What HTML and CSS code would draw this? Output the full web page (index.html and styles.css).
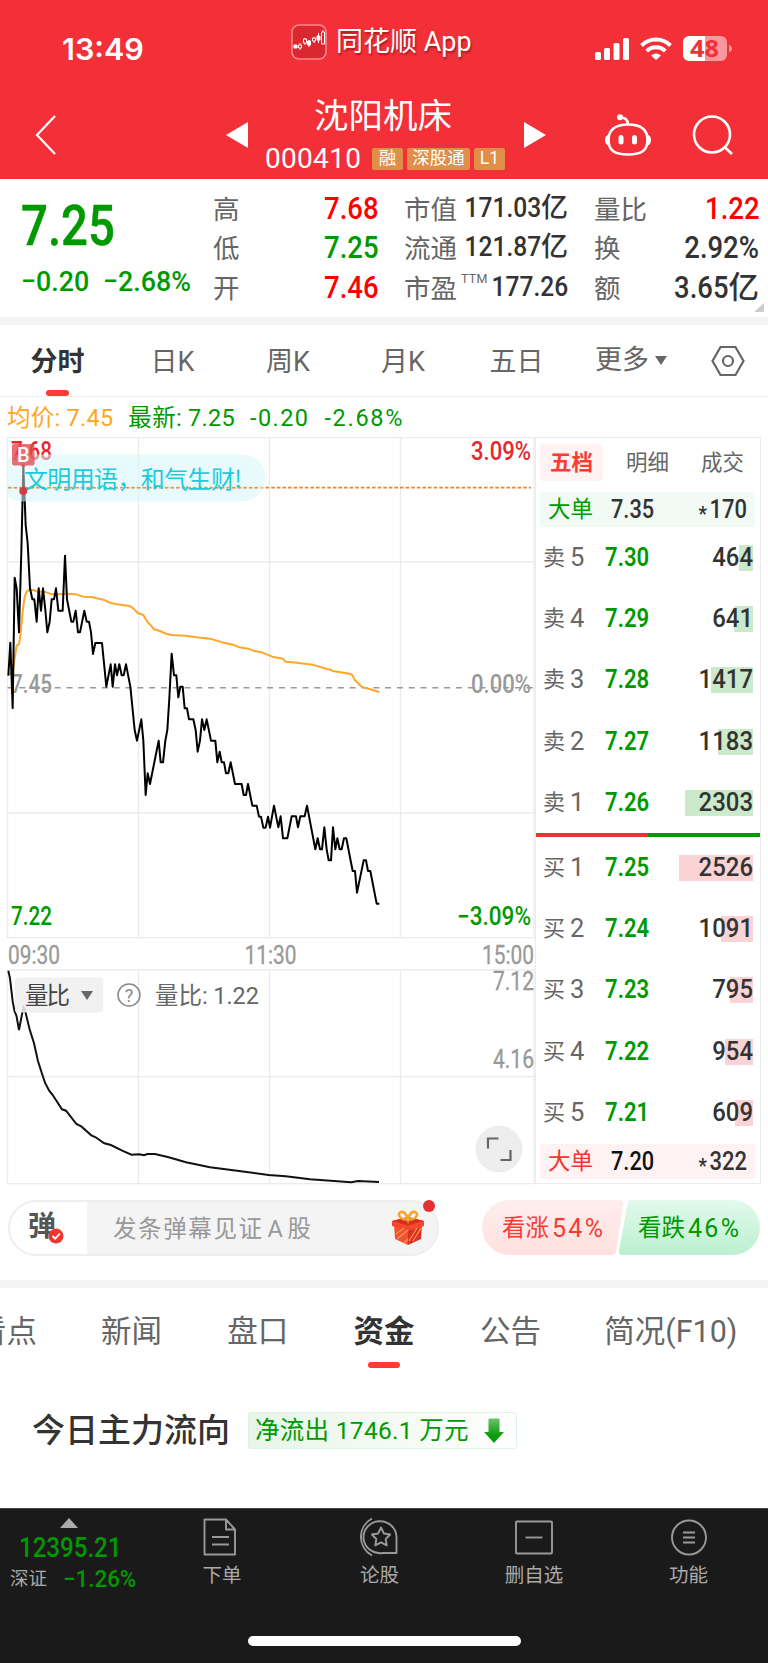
FILE: index.html
```html
<!DOCTYPE html>
<html lang="zh-CN">
<head>
<meta charset="utf-8">
<title>沈阳机床 000410</title>
<link rel="stylesheet" href="styles.css">
</head>
<body>
<header class="top">
  <div class="status">
    <span class="clock">13:49</span>
    <div class="brand">
      <svg width="36" height="36" viewBox="0 0 36 36"><rect x="1" y="1" width="34" height="34" rx="7" fill="#dd2730" stroke="#f9898c" stroke-width="1.6"/><g stroke="#fff" stroke-width="1"><path d="M9 19v7M14 14v7M18 16v7M23 13v6M27.500 9v10M32 6v12"/><g fill="#fff"><path d="M3 21h3v3H3zM16.500 17h3v4h-3zM26 12h3v4h-3z"/></g><g fill="#dd2730"><path d="M7.500 21h3v3h-3zM12.500 15h3v4h-3zM21.500 14h3v3h-3zM30.500 8h3v12h-3z"/></g></g></svg>
      <span>同花顺 App</span>
    </div>
    <svg class="signals" width="140" height="28" viewBox="0 0 140 28">
      <g fill="#fff"><rect x="0" y="17" width="6" height="8" rx="1.500"/><rect x="9" y="13" width="6" height="12" rx="1.500"/><rect x="18.500" y="8" width="6" height="17" rx="1.500"/><rect x="28" y="3" width="6" height="22" rx="1.500"/><path d="M61 25l-5-4.500a8 8 0 0 1 10 0z"/></g>
      <g fill="none" stroke="#fff" stroke-width="4"><path d="M46.500 10.500a20.500 20.500 0 0 1 29 0"/><path d="M51.700 16.200a13.200 13.200 0 0 1 18.600 0"/></g>
      <path d="M94 1h16v25H94a6 6 0 0 1-6-6V7a6 6 0 0 1 6-6z" fill="#fff"/><path d="M110 1h16a6 6 0 0 1 6 6v13a6 6 0 0 1-6 6h-16zM134 10q3 1 3 3.500t-3 3.500z" fill="#f9989c"/>
      <text x="95" y="21.500" textLength="29" lengthAdjust="spacingAndGlyphs" class="batt">48</text>
    </svg>
  </div>
  <div class="nav">
    <svg width="24" height="44" viewBox="0 0 24 44"><path d="M21 3L3 22l18 19" fill="none" stroke="#fff" stroke-width="2.200"/></svg>
    <svg width="22" height="26" viewBox="0 0 22 26"><path d="M22 0v26L0 13z" fill="#fff"/></svg>
    <div class="stock">
      <h1>沈阳机床</h1>
      <div class="code"><b>000410</b><i>融</i><i>深股通</i><i>L1</i></div>
    </div>
    <svg width="22" height="26" viewBox="0 0 22 26"><path d="M0 0v26l22-13z" fill="#fff"/></svg>
    <svg width="46" height="44" viewBox="0 0 46 44"><g fill="none" stroke="#fff" stroke-width="2.600"><path d="M3.500 27C3.500 17 10 11.500 23 11.500S42.500 17 42.500 27 37 41.500 23 41.500 3.500 37 3.500 27z"/><path d="M15 4.500q8 0 8 7"/></g><g fill="#fff"><circle cx="15" cy="4.300" r="3"/><rect x="13.500" y="22" width="5" height="9.500" rx="2.500"/><rect x="27" y="22" width="5" height="9.500" rx="2.500"/><path d="M4.500 21.500Q0 22 0 27t4.500 6zM41.500 21.500Q46 22 46 27t-4.500 6z"/></g></svg>
    <svg width="42" height="42" viewBox="0 0 42 42"><g fill="none" stroke="#fff" stroke-width="2.600"><circle cx="20" cy="20.500" r="18"/><path d="M32.500 33l7.500 7"/></g></svg>
  </div>
</header>

<section class="quote">
  <div class="last">
    <div class="price"><span class="din">7.25</span></div>
    <div class="chg"><span class="din">−0.20</span><span class="din">−2.68%</span></div>
  </div>
  <dl>
    <dt>高</dt><dd class="up"><span class="din r">7.68</span></dd>
    <dt>低</dt><dd class="down"><span class="din r">7.25</span></dd>
    <dt>开</dt><dd class="up"><span class="din r">7.46</span></dd>
  </dl>
  <dl class="mid">
    <dt>市值</dt><dd><span class="din r">171.03</span>亿</dd>
    <dt>流通</dt><dd><span class="din r">121.87</span>亿</dd>
    <dt>市盈<sup>TTM</sup></dt><dd><span class="din r">177.26</span></dd>
  </dl>
  <dl>
    <dt>量比</dt><dd class="up"><span class="din r">1.22</span></dd>
    <dt>换</dt><dd><span class="din r">2.92%</span></dd>
    <dt>额</dt><dd><span class="din r">3.65</span>亿</dd>
  </dl>
  <span class="corner"></span>
</section>

<nav class="periods">
  <a class="on">分时</a><a>日K</a><a>周K</a><a>月K</a><a>五日</a>
  <a>更多<svg width="12" height="9" viewBox="0 0 12 9"><path d="M0 0h12L6 9z" fill="#666"/></svg></a>
  <svg width="34" height="32" viewBox="0 0 34 32"><g fill="none" stroke="#666" stroke-width="2.200"><path d="M1.500 16L9.500 2h15l8 14-8 14h-15z"/><circle cx="17" cy="16" r="5"/></g></svg>
</nav>

<div class="legend"><span class="avg">均价: 7.45</span><span>最新: 7.25</span><span>-0.20</span><span>-2.68%</span></div>

<main class="board">
  <svg class="chart" width="535" height="749" viewBox="0 437 535 749">
    <g fill="none" stroke="#ebebeb" stroke-width="1.300">
      <path d="M7.500 437.500H534V937.700H7.500zM138.500 437.500V937.700M269.500 437.500V937.700M400.500 437.500V937.700M7.500 562H534M7.500 813H534"/>
      <path d="M7.500 970H534V1183.700H7.500zM138.500 970v213.700M269.500 970v213.700M400.500 970v213.700M7.500 1076.700H534"/>
    </g>
    <g class="num">
      <text x="11" y="460" textLength="41" lengthAdjust="spacingAndGlyphs" class="t-up">7.68</text>
      <text x="471" y="460" textLength="60" lengthAdjust="spacingAndGlyphs" class="t-up">3.09%</text>
      <text x="11" y="692.500" textLength="41" lengthAdjust="spacingAndGlyphs" class="t-flat">7.45</text>
      <text x="471" y="692.500" textLength="60" lengthAdjust="spacingAndGlyphs" class="t-flat">0.00%</text>
      <text x="11" y="924.500" textLength="41" lengthAdjust="spacingAndGlyphs" class="t-down">7.22</text>
      <text x="457" y="924.500" textLength="74" lengthAdjust="spacingAndGlyphs" class="t-down">−3.09%</text>
    </g>
    <path d="M7.500 687.700H534" stroke="#999" stroke-width="1.400" stroke-dasharray="6 5.800"/>
    <path d="M8 487.700H531" stroke="#f5821f" stroke-width="1.800" stroke-dasharray="3.600 2"/>
    <g transform="translate(0 425) scale(.33333)" fill="none" stroke-linejoin="round">
      <polyline stroke="#ffa62b" stroke-width="6" points="25,748 38,742 44,700 50,662 57,658 62,625 68,560 74,515 80,500 88,494 100,495 112,500 130,499 150,506 175,508 200,506 228,508 250,515 275,516 290,520 310,524 330,533 350,538 390,543 400,550 413,564 430,570 443,592 452,600 462,613 480,618 500,627 515,630 555,632 590,637 630,641 670,653 700,659 718,667 745,671 765,679 785,682 817,695 848,701 857,710 890,713 938,719 980,732 992,734 998,738 1050,746 1058,752 1065,766 1083,784 1100,790 1138,801"/>
      <polyline stroke="#000" stroke-width="6" points="25,752 31,653 38,850 44,458 50,490 57,622 64,380 70,120 77,300 83,355 90,490 97,523 103,523 110,590 116,490 123,557 129,490 136,555 142,622 149,590 155,523 162,523 168,490 175,557 188,557 195,392 201,523 214,590 220,590 227,557 234,622 240,622 253,557 260,590 267,590 273,622 279,687 286,654 306,654 319,785 332,718 338,785 345,718 351,751 358,718 365,751 371,751 378,718 391,785 404,915 411,947 424,883 430,947 437,1110 443,1045 450,1077 476,947 482,1012 489,1012 496,947 502,915 508,820 515,686 522,751 529,751 535,817 541,785 548,785 554,850 561,850 567,883 580,883 587,915 593,980 600,947 606,883 613,915 620,883 633,947 646,947 652,1012 659,980 665,1012 672,1012 678,1045 685,1045 692,1012 705,1077 725,1077 731,1110 738,1110 744,1077 757,1142 770,1142 777,1175 783,1175 790,1208 797,1208 804,1175 810,1208 822,1142 835,1207 842,1174 849,1240 862,1240 875,1174 888,1174 894,1207 901,1174 914,1174 921,1142 946,1273 953,1240 960,1273 966,1273 973,1207 980,1273 986,1306 993,1306 999,1207 1006,1273 1012,1240 1019,1273 1025,1273 1032,1240 1039,1240 1058,1338 1065,1338 1071,1403 1091,1306 1098,1306 1104,1338 1111,1338 1130,1436 1138,1436"/>
    </g>
    <path d="M7.500 460q6-5.500 15-5.500H242a23.500 23.500 0 0 1 0 47H22.500q-9 0-15-5z" fill="#d6f5f8" fill-opacity=".55"/>
    <path d="M8 487.700H259" stroke="#f5821f" stroke-width="1.500" stroke-dasharray="3.600 2" opacity=".7"/>
    <text x="24" y="487.500" textLength="218" class="danmu">文明用语，和气生财!</text>
    <circle cx="23.300" cy="491" r="4" fill="#cf3f46"/>
    <path d="M14 444h18.500a2 2 0 0 1 2 2v17.500a2 2 0 0 1-2 2H26l-2.700 2.700-2.700-2.700H14a2 2 0 0 1-2-2V446a2 2 0 0 1 2-2z" fill="#e5484f" fill-opacity=".78"/>
    <path d="M23.300 468v20" stroke="#cf3f46" stroke-width="1" stroke-dasharray="2 1.500"/>
    <text x="17" y="462" class="pin">B</text>

    <g class="num t-flat axis">
      <text x="8" y="963.500" textLength="52" lengthAdjust="spacingAndGlyphs">09:30</text>
      <text x="244.500" y="963.500" textLength="52" lengthAdjust="spacingAndGlyphs">11:30</text>
      <text x="482" y="963.500" textLength="52" lengthAdjust="spacingAndGlyphs">15:00</text>
      <text x="493" y="990" textLength="41" lengthAdjust="spacingAndGlyphs">7.12</text>
      <text x="493" y="1068" textLength="41" lengthAdjust="spacingAndGlyphs">4.16</text>
    </g>
    <polyline fill="none" stroke="#111" stroke-width="2" points="8.3,970.7 10,978.3 12.7,1001.7 14.5,1011 16.5,1016 19,1030 20.7,1021 23.4,1007.3 24.8,1009.3 29.6,1029.3 34,1043.3 37.9,1060.7 41.7,1072.7 45,1082.7 49.2,1090.7 52.7,1095 62,1109.3 66,1110.7 76.4,1124 81.6,1126.7 91.3,1135.3 95.7,1137.3 104.3,1143.3 110.9,1145 122.2,1150.7 131.5,1154.7 139.5,1154.3 144,1155.3 147.4,1154 155,1154 168.7,1157.3 186,1162.3 210,1167.3 241,1171.3 268.6,1175 285.8,1176.3 310,1179.3 351.2,1182.3 358,1181 379,1182"/>
    <rect x="15" y="977.500" width="88" height="35" rx="3" fill="#efefef" fill-opacity=".88"/>
    <text x="25" y="1004" textLength="45" class="lbl dark">量比</text>
    <path d="M81 991h12l-6 9z" fill="#666"/>
    <circle cx="129" cy="995" r="11" fill="none" stroke="#888" stroke-width="1.500"/>
    <text x="129" y="1001.500" text-anchor="middle" class="q">?</text>
    <text x="155" y="1004" textLength="104" class="lbl">量比: 1.22</text>
    <circle cx="499" cy="1149" r="23.500" fill="#ededed"/>
    <path d="M488 1148.500V1138.500H498.500M500.500 1160H510.500V1150" fill="none" stroke="#666" stroke-width="2.200"/>
  </svg>

  <aside class="book">
    <div class="btabs"><b>五档</b><span>明细</span><span>成交</span></div>
    <div class="big ask"><span>大单</span><em class="din">7.35</em><em class="din r"><small>*</small>170</em></div>
    <div class="lv"><span>卖<b>5</b></span><em class="din">7.30</em><u style="width:14px"></u><em class="din r">464</em></div>
    <div class="lv"><span>卖<b>4</b></span><em class="din">7.29</em><u style="width:19px"></u><em class="din r">641</em></div>
    <div class="lv"><span>卖<b>3</b></span><em class="din">7.28</em><u style="width:42px"></u><em class="din r">1417</em></div>
    <div class="lv"><span>卖<b>2</b></span><em class="din">7.27</em><u style="width:35px"></u><em class="din r">1183</em></div>
    <div class="lv"><span>卖<b>1</b></span><em class="din">7.26</em><u style="width:68px"></u><em class="din r">2303</em></div>
    <div class="ratio"></div>
    <div class="lv bid"><span>买<b>1</b></span><em class="din">7.25</em><u style="width:74px"></u><em class="din r">2526</em></div>
    <div class="lv bid"><span>买<b>2</b></span><em class="din">7.24</em><u style="width:32px"></u><em class="din r">1091</em></div>
    <div class="lv bid"><span>买<b>3</b></span><em class="din">7.23</em><u style="width:23px"></u><em class="din r">795</em></div>
    <div class="lv bid"><span>买<b>4</b></span><em class="din">7.22</em><u style="width:28px"></u><em class="din r">954</em></div>
    <div class="lv bid"><span>买<b>5</b></span><em class="din">7.21</em><u style="width:18px"></u><em class="din r">609</em></div>
    <div class="big buy"><span>大单</span><em class="din">7.20</em><em class="din r"><small>*</small>322</em></div>
  </aside>
</main>

<section class="talk">
  <div class="input">
    <div class="toggle">弹<svg width="16" height="16" viewBox="0 0 16 16"><circle cx="8" cy="8" r="7.500" fill="#f2352f"/><path d="M4.500 8l2.700 2.700 4.600-5" fill="none" stroke="#fff" stroke-width="1.800"/></svg></div>
    <span>发条弹幕见证<b>A</b>股</span>
    <svg class="gift" width="34" height="36" viewBox="0 0 34 36"><path d="M3 14l14 5v16L4 29z" fill="#f0532f"/><path d="M31 14l-14 5v16l13-6z" fill="#d93222"/><path d="M1 11l16-4 16 4v5l-16 5-16-5z" fill="#f4492f"/><path d="M1 11l16-4 16 4-16 4.500z" fill="#d52f22"/><path d="M5 24l8-6M6 29l11-9M13 33l4-4M22 31l8-13M18 31l8-13" stroke="#ff9557" stroke-width="1.200"/><g fill="none" stroke="#f3a62b" stroke-width="2.600"><path d="M17 9.500C8 10 6 3 10 2s6 4 7 7.500c1-4 3-8.500 7-7.500s2 8-7 7.500z"/></g></svg>
    <span class="dot"></span>
  </div>
  <div class="vote">
    <svg width="278" height="55" viewBox="0 0 278 55"><defs><linearGradient id="vu" x2="0" y2="1"><stop stop-color="#ffeeee"/><stop offset="1" stop-color="#ffe1de"/></linearGradient><linearGradient id="vd" x2="0" y2="1"><stop stop-color="#e2faec"/><stop offset="1" stop-color="#bbf0d0"/></linearGradient></defs><path d="M27.500 0H138q4 0 3.500 4L134 51q-.7 4-4.500 4H27.500a27.500 27.500 0 0 1 0-55z" fill="url(#vu)"/><path d="M250.500 0H150q-4 0-4.600 4L137 51q-.5 4 3.500 4h110a27.500 27.500 0 0 0 0-55z" fill="url(#vd)"/><g fill="#fb3a33"><text x="20" y="36">看涨</text><text x="70" y="36.500" class="pc" textLength="51">54%</text></g><g fill="#090"><text x="156" y="36">看跌</text><text x="206" y="36.500" class="pc" textLength="51">46%</text></g></svg>
  </div>
</section>

<nav class="sections"><a>看点</a><a>新闻</a><a>盘口</a><a class="on">资金</a><a>公告</a><a>简况(F10)</a></nav>

<section class="flow">
  <h2>今日主力流向</h2>
  <div class="net"><span>净流出 1746.1 万元</span><svg width="20" height="25" viewBox="0 0 20 25"><defs><linearGradient id="ar" x2="0" y2="1"><stop stop-color="#6cc46c"/><stop offset=".7" stop-color="#0a9a0a"/></linearGradient></defs><path d="M4.500 1.500q0-1 1-1h9q1 0 1 1V14H20L10 25 0 14h4.500z" fill="url(#ar)"/></svg></div>
</section>

<footer class="dock">
  <div class="index">
    <svg width="18" height="10" viewBox="0 0 18 10"><path d="M9 0l9 10H0z" fill="#aaa"/></svg>
    <div class="ix"><span class="din">12395.21</span></div>
    <div class="ixc">深证<span class="din">−1.26%</span></div>
  </div>
  <div class="item i1"><svg width="40" height="40" viewBox="0 0 40 40"><g><path d="M2.500 2.500H24l9 10V37.500H2.500zM24 2.500V12.500H33M10 20h17M10 27.500h17"/></g></svg>下单</div>
  <div class="item i2"><svg width="40" height="40" viewBox="0 0 40 40"><g><path d="M36.500 36H22.500A16.500 16 0 1 1 36.500 20zM12 1.500A21 21 0 0 0 12 38.500"/><path d="M21 10.500l2.900 6 6.200 1-4.400 4.500 1 6.300-5.700-2.900-5.700 2.900 1-6.300-4.400-4.500 6.200-1z"/></g></svg>论股</div>
  <div class="item i3"><svg width="40" height="40" viewBox="0 0 40 40"><g><rect x="2" y="4.500" width="36" height="32" rx="1"/><path d="M11.500 20.500h17"/></g></svg>删自选</div>
  <div class="item i4"><svg width="40" height="40" viewBox="0 0 40 40"><g><circle cx="20" cy="20.500" r="17"/><path d="M14 15.500h12M14 20.500h12M14 25.500h12"/></g></svg>功能</div>
  <span class="home"></span>
</footer>
</body>
</html>
```
FILE: styles.css
```css
* { box-sizing: border-box; }
body { margin: 0; width: 768px; background: #fff; color: #333; font-family: Roboto, "Noto Sans CJK SC", sans-serif; overflow-x: hidden; }
h1, h2, dl, dd, dt { margin: 0; font-weight: 400; }
em, i { font-style: normal; }
svg { display: block; flex: none; }
.din { display: inline-block; font-weight: 500; white-space: nowrap; transform: scaleX(.9); transform-origin: 0 50%; }
.din.r { transform-origin: 100% 50%; }
.up { color: #f00; }
.down { color: #090; }

.top { height: 179px; background: #f33038; color: #fff; }
.status { height: 94px; display: flex; align-items: flex-start; }
.clock { margin: 31px 0 0 62px; width: 229px; font: 600 30.500px/36px Inter, sans-serif; letter-spacing: 0; }
.brand { display: flex; align-items: center; gap: 9px; margin-top: 23px; width: 304px; font-size: 27px; line-height: 36px; text-shadow: 1px 2px 2px rgba(100, 0, 0, .5); white-space: nowrap; }
.brand span { padding-top: 1px; }
.signals { margin-top: 35px; }
.batt { font: 700 24px "Open Sans"; fill: #f33038; }
.nav { height: 85px; display: grid; grid-template-columns: 192px 22px 276px 22px 59px 87px 60px; padding-left: 34px; align-items: start; }
.nav > svg { margin-top: 28px; }
.nav > svg:first-child { margin-top: 19px; }
.nav > svg:nth-child(5) { margin: 19px 0 0; grid-column: 6; }
.nav > svg:last-child { margin: 20px 0 0; grid-column: 7; }
.stock h1 { font-size: 34.500px; line-height: 44px; margin-left: 66px; }
.code { display: flex; align-items: center; margin: 6px 0 0 17px; height: 28px; }
.code b { font-weight: 400; font-size: 28px; width: 107px; letter-spacing: .3px; }
.code i { background: #e08e48; border-radius: 2px; height: 22px; line-height: 21px; font-size: 17.500px; width: 31px; text-align: center; margin-right: 4px; margin-top: 2px; }
.code i:nth-of-type(2) { width: 63px; }

.quote { position: relative; height: 146px; border-bottom: 8px solid #f4f4f4; display: grid; grid-template-columns: 192px 165px 190px 191px; padding-left: 21px; }
.quote dl:nth-of-type(2), .quote dl:nth-of-type(3) { padding-left: 26px; }
.last { color: #090; }
.price { height: 94px; font-size: 55px; line-height: 95px; }
.price .din { transform: scaleX(.86); -webkit-text-stroke: .5px; }
.chg { font-size: 28.500px; line-height: 18px; display: flex; }
.chg .din { width: 82px; transform: scaleX(.94); }
.chg .din + .din { margin-left: 0; }
.quote dl { display: grid; grid-template-columns: auto 1fr; grid-auto-rows: 39.300px; padding-top: 10px; align-content: start; }
.quote dt { font-size: 26.500px; line-height: 41px; color: #666; white-space: nowrap; }
.quote dd { font-size: 30.500px; line-height: 39px; text-align: right; white-space: nowrap; font-weight: 500; }
.quote .mid dd { font-size: 27px; }
.quote .mid .din { transform: scaleX(.91); }
.quote .mid dt { width: 51px; }
sup { font-size: 12.500px; vertical-align: 15px; line-height: 0; margin-left: 4px; letter-spacing: .3px; }
.corner { position: absolute; right: 4px; bottom: 5px; border-left: 10px solid transparent; border-bottom: 9px solid #ccc; }

.periods { height: 72px; border-bottom: 1.500px solid #eee; display: grid; grid-template-columns: 115px 115px 116px 114px 113px 120px 75px; align-items: center; color: #666; font-size: 27px; }
.periods a { text-align: center; position: relative; line-height: 73px; height: 70px; }
.periods a:nth-child(6) { display: flex; align-items: center; gap: 6px; padding-left: 22px; }
.periods > svg { margin-left: 18px; }
.periods .on { color: #333; font-weight: 700; }
.on::after { content: ""; position: absolute; left: 46px; bottom: 0; width: 23px; height: 6px; border-radius: 3px; background: #fc3b33; }
.legend { height: 40px; padding-left: 7px; display: flex; gap: 15px; font-size: 23.500px; letter-spacing: .3px; line-height: 42px; color: #090; white-space: pre; }
.legend .avg { letter-spacing: .25px; color: #ffa61a; }
.legend span:nth-child(3) { letter-spacing: 1.400px; }
.legend span:nth-child(4) { letter-spacing: 1.700px; }

.board { display: flex; height: 749px; }
.num text { font: 500 25px Roboto; }
.t-up { fill: #e8262d; }
.t-down { fill: #090; }
.t-flat { fill: #999; }
.num.axis text { font-weight: 400; stroke: #999; stroke-width: .3px; }
.danmu { font: 400 24px "Noto Sans CJK SC"; fill: #1ccbdc; }
.pin { font: 500 20px Roboto; fill: #fff; }
.lbl { font: 400 23.500px Roboto, "Noto Sans CJK SC"; fill: #666; }
.lbl.dark { fill: #444; }
.q { font: 400 18px Roboto; fill: #888; }

.book { width: 226px; border: 1px solid #ebebeb; padding-left: 4px; height: 747px; }
.btabs { height: 54px; display: grid; grid-template-columns: 63px 23px 75px 60px; padding-top: 6px; font-size: 21.500px; line-height: 38px; color: #666; }
.btabs b { color: #fc3b33; background: #fff2f2; border-radius: 3px; text-align: center; font-weight: 700; height: 37px; }
.btabs span:nth-child(2) { grid-column: 3; }
.big { width: 215px; height: 35px; display: grid; grid-template-columns: 63px 70px 66px; padding-left: 8px; line-height: 35px; font-size: 25px; }
.big span { font-size: 22.500px; }
.big .r, .lv .r { text-align: right; }
.big .din { transform: scaleX(.87); }
.big .r { transform: scaleX(.88); }
small { font-size: 21px; vertical-align: -3px; line-height: 0; letter-spacing: 3px; font-weight: 700; }
.ask { background: #f2faf6; }
.ask span { color: #090; }
.buy { background: #fff2f2; color: #111; }
.buy span { color: #f2352f; }
.buy .r { color: #333; }
.lv { position: relative; width: 213px; height: 61.200px; display: grid; grid-template-columns: 62px 60px 89px; padding-left: 3px; line-height: 61px; font-size: 26px; }
.lv span { font-size: 22px; color: #666; white-space: nowrap; display: flex; gap: 5px; }
.lv b { font-size: 25.500px; font-weight: 400; }
.lv span + em { color: #090; font-weight: 600; transform: scaleX(.85); }
.lv em { z-index: 1; line-height: 60px; }
.lv .r { transform: scaleX(.92); margin-right: 1px; }
.lv u { position: absolute; right: 0; top: 18px; height: 26px; background: #cbe9cb; }
.lv.bid { top: -1px; }
.lv.bid u { background: #fad3d5; }
.ratio { height: 4px; margin: 0 0 1px -4px; background: linear-gradient(90deg, #f03035 50%, #090 50%); }

.talk { height: 102px; border-bottom: 8px solid #f4f4f4; display: flex; padding: 14px 0 0 8px; }
.input { position: relative; width: 431px; height: 56px; border: 2px solid #eee; border-radius: 28px; background: #f4f4f4; display: flex; align-items: center; font-size: 23.500px; color: #999; }
.toggle { position: relative; width: 77px; height: 52px; border-radius: 26px 0 0 26px; background: #fff; color: #555; font-size: 28px; font-weight: 700; line-height: 50px; padding-left: 18px; }
.toggle svg { position: absolute; left: 38px; top: 26px; }
.input > span { margin: -3px 0 0 26px; letter-spacing: 1.600px; white-space: nowrap; }
.input span b { font-weight: 400; margin: 0 3px 0 4px; }
.gift { position: absolute; left: 381px; top: 8px; }
.input > .dot { position: absolute; right: 2px; top: -2px; width: 12px; height: 12px; border-radius: 50%; background: #e62e33; margin: 0; }
.vote { margin-left: 43px; }
.vote text { font: 400 23.500px Roboto, "Noto Sans CJK SC"; }
.vote .pc { font-size: 25px; }

.sections { height: 94px; display: flex; margin-left: -24px; color: #666; font-size: 30.500px; line-height: 88px; white-space: nowrap; }
.sections a { position: relative; width: 126.300px; flex: none; }
.sections a:first-child { width: 125px; }
.sections a:last-child { margin-left: -2px; }
.sections .on { color: #333; font-weight: 700; }
.sections .on::after { left: 14px; bottom: 14px; width: 32px; }
.flow { height: 126px; display: flex; padding: 28px 0 0 32px; }
.flow h2 { font-size: 33px; line-height: 42px; font-weight: 500; width: 216px; white-space: nowrap; }
.net { width: 269px; height: 37px; margin-top: 2px; border: 1px solid #e0f2e0; border-radius: 3px; background: linear-gradient(90deg, #e8f5e8, #fff); color: #090; font-size: 24.500px; letter-spacing: .3px; line-height: 34px; display: flex; align-items: center; padding-left: 6px; white-space: nowrap; }
.net span { width: 229px; }

.dock { position: relative; height: 155px; background: #1a1a1a; border-top: 1px solid #444; display: grid; grid-template-columns: 146px 152px 163px 146px 163px; color: #aaa; font-size: 19.500px; }
.index svg { margin: 9px 0 0 60px; }
.ix { color: #090; font-size: 28px; line-height: 30px; padding: 5px 0 0 19px; }
.ix .din { transform: scaleX(.86); }
.ixc { font-size: 18.500px; line-height: 30px; margin-left: 10px; display: flex; gap: 16px; margin-top: 1px; }
.ixc .din { color: #090; font-size: 23.500px; transform: scaleX(.95); }
.item { display: flex; flex-direction: column; align-items: center; line-height: 28px; padding-top: 8px; gap: 5px; white-space: nowrap; }
.item g { fill: none; stroke: #999; stroke-width: 1.900; stroke-linejoin: round; }
.home { position: absolute; left: 248px; bottom: 17px; width: 273px; height: 10px; border-radius: 5px; background: #fff; }
```
